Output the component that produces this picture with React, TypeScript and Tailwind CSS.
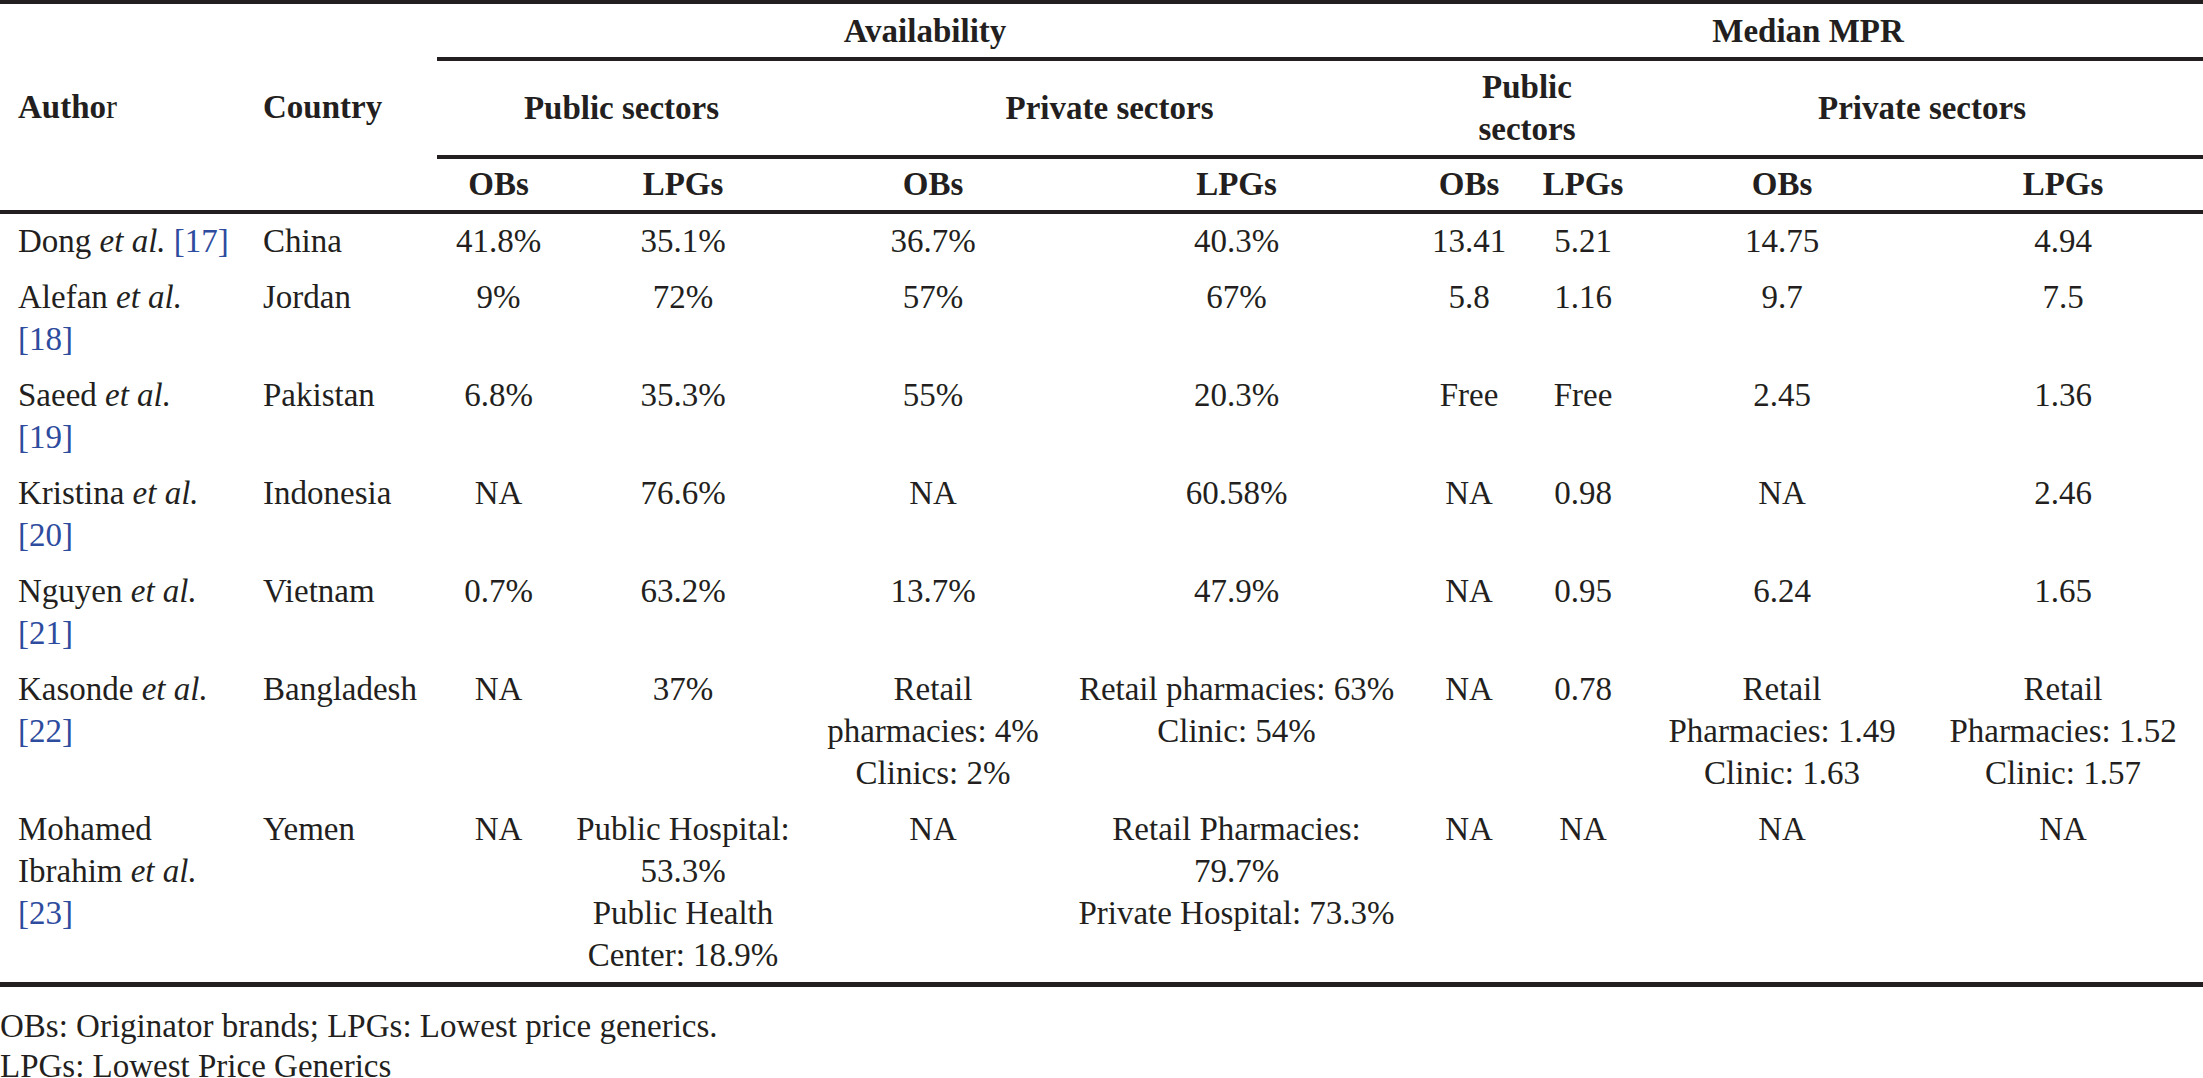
import React from "react"

type Row = {
  author: string
  ref: string
  split?: boolean
  authorLines?: string[]
  country: string
  cells: string[][]
}

const rows: Row[] = [
  { author: "Dong", ref: "[17]", country: "China", cells: [["41.8%"], ["35.1%"], ["36.7%"], ["40.3%"], ["13.41"], ["5.21"], ["14.75"], ["4.94"]] },
  { author: "Alefan", ref: "[18]", split: true, country: "Jordan", cells: [["9%"], ["72%"], ["57%"], ["67%"], ["5.8"], ["1.16"], ["9.7"], ["7.5"]] },
  { author: "Saeed", ref: "[19]", split: true, country: "Pakistan", cells: [["6.8%"], ["35.3%"], ["55%"], ["20.3%"], ["Free"], ["Free"], ["2.45"], ["1.36"]] },
  { author: "Kristina", ref: "[20]", split: true, country: "Indonesia", cells: [["NA"], ["76.6%"], ["NA"], ["60.58%"], ["NA"], ["0.98"], ["NA"], ["2.46"]] },
  { author: "Nguyen", ref: "[21]", split: true, country: "Vietnam", cells: [["0.7%"], ["63.2%"], ["13.7%"], ["47.9%"], ["NA"], ["0.95"], ["6.24"], ["1.65"]] },
  {
    author: "Kasonde",
    ref: "[22]",
    split: true,
    country: "Bangladesh",
    cells: [
      ["NA"],
      ["37%"],
      ["Retail", "pharmacies: 4%", "Clinics: 2%"],
      ["Retail pharmacies: 63%", "Clinic: 54%"],
      ["NA"],
      ["0.78"],
      ["Retail", "Pharmacies: 1.49", "Clinic: 1.63"],
      ["Retail", "Pharmacies: 1.52", "Clinic: 1.57"],
    ],
  },
  {
    author: "Ibrahim",
    authorLines: ["Mohamed"],
    ref: "[23]",
    split: true,
    country: "Yemen",
    cells: [
      ["NA"],
      ["Public Hospital:", "53.3%", "Public Health", "Center: 18.9%"],
      ["NA"],
      ["Retail Pharmacies:", "79.7%", "Private Hospital: 73.3%"],
      ["NA"],
      ["NA"],
      ["NA"],
      ["NA"],
    ],
  },
]

const colWidths = [248, 189, 123, 246, 254, 353, 112, 116, 282, 280]

const rule = "border-b-4 border-[#231f20]"

export default function App() {
  return (
    <div className="w-[2203px] bg-white text-[#231f20] font-['Liberation_Serif','Times_New_Roman',serif] text-[33px]">
      <div className="border-t-4 border-[#231f20]">
        <table className="w-full table-fixed border-separate border-spacing-0 leading-[42px]">
          <colgroup>
            {colWidths.map((w, i) => (
              <col key={i} style={{ width: w }} />
            ))}
          </colgroup>
          <thead>
            <tr>
              <th rowSpan={3} className={`pl-[18px] text-left align-middle font-bold ${rule}`}>
                Autho<span className="font-normal">r</span>
              </th>
              <th rowSpan={3} className={`pl-[15px] text-left align-middle font-bold ${rule}`}>
                Country
              </th>
              <th colSpan={4} className={`pt-[6px] pb-[5px] text-center font-bold ${rule}`}>
                Availability
              </th>
              <th colSpan={4} className={`pt-[6px] pb-[5px] text-center font-bold ${rule}`}>
                Median MPR
              </th>
            </tr>
            <tr>
              <th colSpan={2} className={`py-[5px] text-center align-middle font-bold ${rule}`}>
                Public sectors
              </th>
              <th colSpan={2} className={`py-[5px] text-center align-middle font-bold ${rule}`}>
                Private sectors
              </th>
              <th colSpan={2} className={`py-[5px] text-center align-middle font-bold ${rule}`}>
                Public
                <br />
                sectors
              </th>
              <th colSpan={2} className={`py-[5px] text-center align-middle font-bold ${rule}`}>
                Private sectors
              </th>
            </tr>
            <tr>
              {["OBs", "LPGs", "OBs", "LPGs", "OBs", "LPGs", "OBs", "LPGs"].map((h, i) => (
                <th key={i} className={`pt-[4px] pb-[5px] text-center font-bold ${rule}`}>
                  {h}
                </th>
              ))}
            </tr>
          </thead>
          <tbody>
            {rows.map((r, ri) => {
              const last = ri === rows.length - 1
              const pad = last ? "pt-[6px] pb-[6px] border-b-[5px] border-[#231f20]" : "pt-[6px] pb-[8px]"
              return (
                <tr key={ri}>
                  <td className={`pl-[18px] pr-[15px] text-left align-top font-normal ${pad}`}>
                    {r.authorLines?.map((l) => (
                      <div key={l}>{l}</div>
                    ))}
                    <div>
                      {r.author} <i>et al.</i>
                      {!r.split && (
                        <>
                          {" "}
                          <span className="text-[#2e4c9e]">{r.ref}</span>
                        </>
                      )}
                    </div>
                    {r.split && <div className="text-[#2e4c9e]">{r.ref}</div>}
                  </td>
                  <td className={`pl-[15px] text-left align-top ${pad}`}>{r.country}</td>
                  {r.cells.map((c, ci) => (
                    <td key={ci} className={`text-center align-top ${pad}`}>
                      {c.map((l, li) => (
                        <div key={li}>{l}</div>
                      ))}
                    </td>
                  ))}
                </tr>
              )
            })}
          </tbody>
        </table>
      </div>
      <div className="mt-[19px] leading-[40px]">
        <p>OBs: Originator brands; LPGs: Lowest price generics.</p>
        <p>LPGs: Lowest Price Generics</p>
      </div>
    </div>
  )
}
